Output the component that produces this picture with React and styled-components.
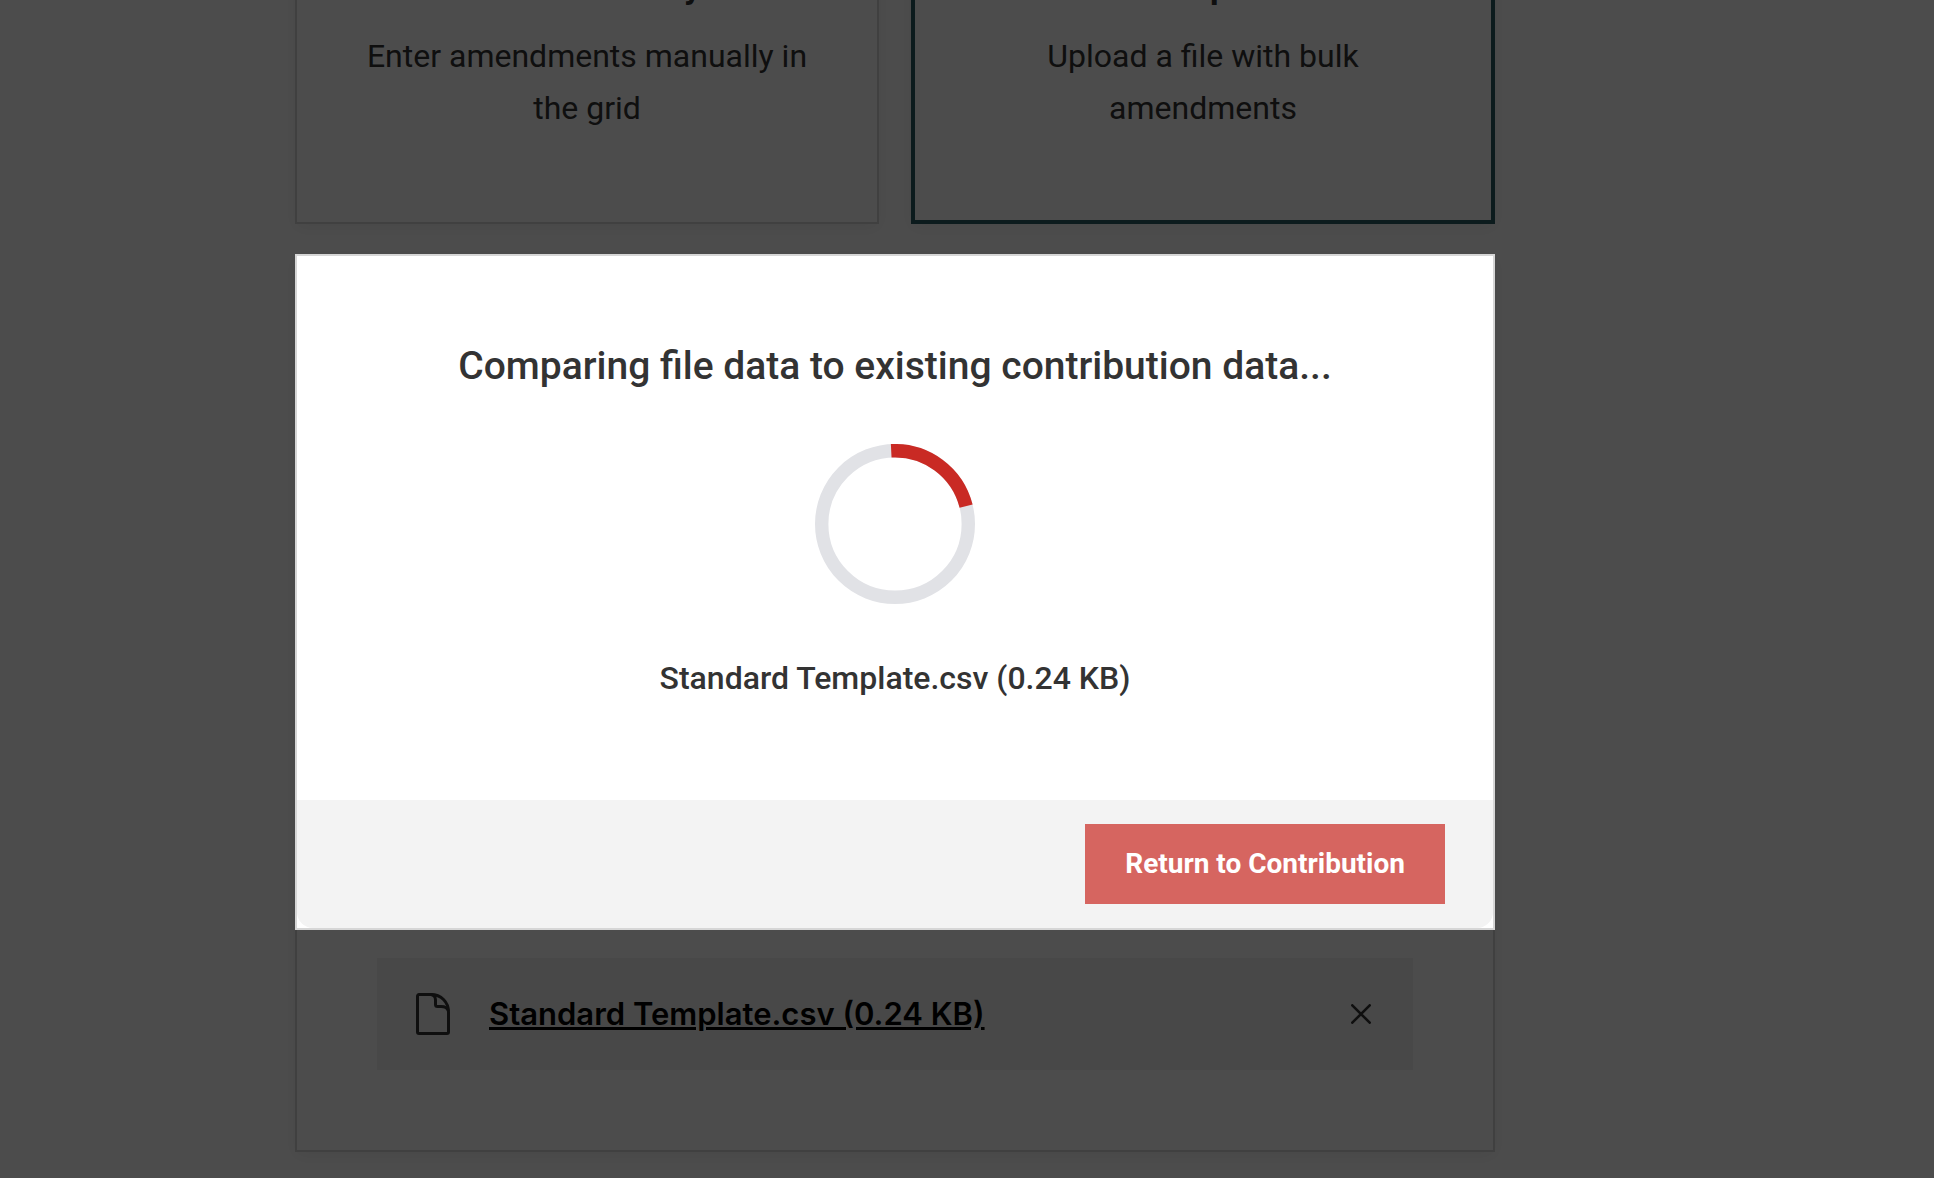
import React from 'react';
import styled, { createGlobalStyle } from 'styled-components';

const GlobalStyle = createGlobalStyle`
  * {
    box-sizing: border-box;
  }

  body {
    margin: 0;
    background: #fff;
    color: #333;
    font-family: Roboto, "Liberation Sans", sans-serif;
  }
`;

// Scrolled to the end: the last panel sits on the bottom edge
const Page = styled.div`
  display: flex;
  flex-direction: column;
  align-items: center;
  justify-content: flex-end;
  height: 100vh;
  padding: 0 144px 26px 0;
  overflow: hidden;
`;

const Content = styled.main`
  flex: none;
  display: flex;
  flex-direction: column;
  gap: 30px;
  width: 100%;
  max-width: 1200px;
`;

const Options = styled.div`
  display: grid;
  grid-template-columns: 1fr 1fr;
  gap: 32px;
`;

const OptionCard = styled.button`
  display: flex;
  flex-direction: column;
  align-items: center;
  padding: ${props => props.$selected ? '60px 62px 86px' : '62px 64px 88px'};
  background: #fff;
  border: ${props => props.$selected ? '4px solid #2b5c62' : '2px solid #d6d6d6'};
  box-shadow: 0 4px 16px rgba(0, 0, 0, 0.06);
  color: inherit;
  font: inherit;
  text-align: center;
  cursor: pointer;
`;

const OptionTitle = styled.span`
  margin-bottom: 20px;
  font-size: 34px;
  font-weight: 700;
  line-height: 48px;
`;

const OptionText = styled.span`
  font-size: 32px;
  line-height: 52px;
`;

const Panel = styled.section`
  display: flex;
  flex-direction: column;
  justify-content: flex-end;
  min-height: 898px;
  padding: 80px;
  background: #fff;
  border: 2px solid #d6d6d6;
  box-shadow: 0 4px 16px rgba(0, 0, 0, 0.06);
`;

const FileRow = styled.div`
  display: flex;
  align-items: center;
  gap: 39px;
  height: 112px;
  padding: 0 42px 0 39px;
  background: #f0f0f0;
`;

const FileLink = styled.a`
  color: #000;
  font-family: Inter, "Liberation Sans", sans-serif;
  font-size: 31px;
  font-weight: 600;
  line-height: 40px;
`;

const RemoveButton = styled.button`
  display: flex;
  margin-left: auto;
  padding: 0;
  background: none;
  border: none;
  color: #333;
  cursor: pointer;
`;

const Overlay = styled.div`
  position: fixed;
  inset: 0;
  display: flex;
  justify-content: center;
  align-items: flex-start;
  padding: 254px 144px 0 0;
  background: rgba(0, 0, 0, 0.7);
`;

const Dialog = styled.div`
  width: 100%;
  max-width: 1200px;
  background: #fff;
  border: 2px solid #d6d6d6;
`;

const DialogBody = styled.div`
  display: flex;
  flex-direction: column;
  align-items: center;
  padding: 84px 80px 96px;
`;

const DialogTitle = styled.h2`
  margin: 0;
  font-size: 39px;
  font-weight: 500;
  line-height: 52px;
`;

const Spinner = styled.svg`
  width: 160px;
  height: 160px;
  margin: 52px 0 48px;
`;

const FileName = styled.p`
  margin: 0;
  font-size: 32px;
  font-weight: 500;
  line-height: 52px;
`;

const DialogFooter = styled.div`
  display: flex;
  justify-content: flex-end;
  padding: 24px 48px;
  background: #f3f3f3;
  border-radius: 0 0 16px 16px;
`;

const PrimaryButton = styled.button`
  height: 80px;
  padding: 0 40px 2px;
  background: #d66560;
  border: none;
  color: #fff;
  font-family: inherit;
  font-size: 28px;
  font-weight: 700;
  cursor: pointer;
`;

const FileIcon = () => (
  <svg width="34" height="42" viewBox="0 0 34 42" fill="none" stroke="#333" strokeWidth="3" strokeLinejoin="round" aria-hidden="true">
    <path d="M3 1.5H15C25 1.500 32.500 9 32.500 19V39a1.500 1.500 0 0 1-1.500 1.500H3A1.500 1.500 0 0 1 1.500 39V3A1.500 1.500 0 0 1 3 1.500Z" />
    <path d="M15 1.500C18 2 19.500 4 19.500 7V11.500A2 2 0 0 0 21.500 13.500H25C29 13.500 31.500 15 32.500 18" />
  </svg>
);

const CloseIcon = () => (
  <svg width="20" height="20" viewBox="0 0 20 20" fill="none" stroke="currentColor" strokeWidth="2.6" strokeLinecap="round" aria-hidden="true">
    <path d="M1.300 1.300 18.700 18.700M18.700 1.300 1.300 18.700" />
  </svg>
);

const options = [
  { id: 'manual', title: 'Enter Manually', text: 'Enter amendments manually in the grid' },
  { id: 'upload', title: 'Bulk Upload', text: 'Upload a file with bulk amendments', selected: true },
];

const file = 'Standard Template.csv (0.24 KB)';

const App = () => (
  <>
    <GlobalStyle />
    <Page>
      <Content>
        <Options>
          {options.map(option => (
            <OptionCard key={option.id} type="button" $selected={option.selected} aria-pressed={!!option.selected}>
              <OptionTitle>{option.title}</OptionTitle>
              <OptionText>{option.text}</OptionText>
            </OptionCard>
          ))}
        </Options>
        <Panel>
          <FileRow>
            <FileIcon />
            <FileLink href="#file">{file}</FileLink>
            <RemoveButton type="button" aria-label="Remove file">
              <CloseIcon />
            </RemoveButton>
          </FileRow>
        </Panel>
      </Content>
    </Page>
    <Overlay>
      <Dialog role="dialog" aria-modal="true" aria-labelledby="dialog-title">
        <DialogBody>
          <DialogTitle id="dialog-title">Comparing file data to existing contribution data...</DialogTitle>
          <Spinner viewBox="0 0 160 160" fill="none" strokeWidth="13.4" role="img" aria-label="Loading">
            <circle cx="80" cy="80" r="73.3" stroke="#e1e2e6" />
            <path d="M76.200 6.800A73.300 73.300 0 0 1 151.100 62.200" stroke="#c92a24" />
          </Spinner>
          <FileName>{file}</FileName>
        </DialogBody>
        <DialogFooter>
          <PrimaryButton type="button">Return to Contribution</PrimaryButton>
        </DialogFooter>
      </Dialog>
    </Overlay>
  </>
);

export default App;
